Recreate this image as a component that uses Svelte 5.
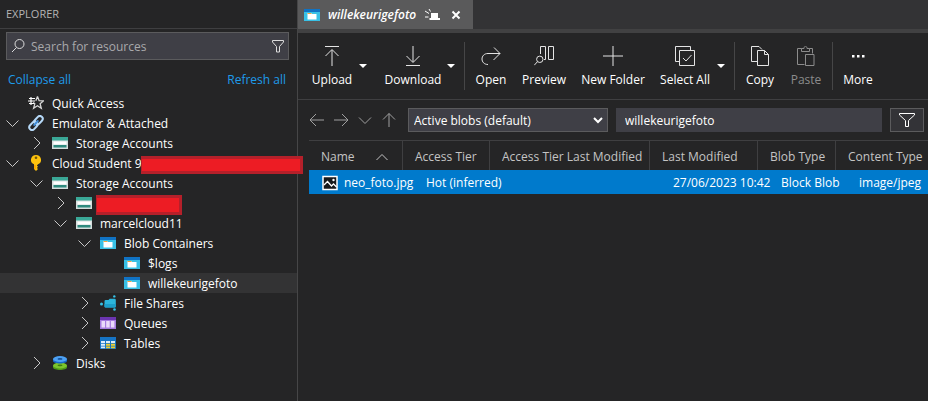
<script>
  const tree = [
    { level: 0, icon: 'quick', label: 'Quick Access', chevron: '' },
    { level: 0, icon: 'link', label: 'Emulator & Attached', chevron: 'open' },
    { level: 1, icon: 'storage', label: 'Storage Accounts', chevron: 'closed' },
    { level: 0, icon: 'key', label: 'Cloud Student 9', chevron: 'open', redacted: 'wide' },
    { level: 1, icon: 'storage', label: 'Storage Accounts', chevron: 'open' },
    { level: 2, icon: 'storage', label: '', chevron: 'closed', redacted: 'name' },
    { level: 2, icon: 'storage', label: 'marcelcloud11', chevron: 'open' },
    { level: 3, icon: 'blob', label: 'Blob Containers', chevron: 'open' },
    { level: 4, icon: 'blob', label: '$logs', chevron: '' },
    { level: 4, icon: 'blob', label: 'willekeurigefoto', chevron: '', selected: true },
    { level: 3, icon: 'share', label: 'File Shares', chevron: 'closed' },
    { level: 3, icon: 'queue', label: 'Queues', chevron: 'closed' },
    { level: 3, icon: 'table', label: 'Tables', chevron: 'closed' },
    { level: 1, icon: 'disks', label: 'Disks', chevron: 'closed' }
  ];

  const toolbar = [
    [
      { label: 'Upload', icon: 'upload', width: 48, menu: true },
      { label: 'Download', icon: 'download', width: 62, menu: true }
    ],
    [
      { label: 'Open', icon: 'open', width: 42 },
      { label: 'Preview', icon: 'preview', width: 52 },
      { label: 'New Folder', icon: 'plus', width: 74 },
      { label: 'Select All', icon: 'select', width: 58, menu: true }
    ],
    [
      { label: 'Copy', icon: 'copy', width: 40 },
      { label: 'Paste', icon: 'paste', width: 40, disabled: true }
    ],
    [{ label: 'More', icon: 'more', width: 40 }]
  ];

  const columns = ['Name', 'Access Tier', 'Access Tier Last Modified', 'Last Modified', 'Blob Type', 'Content Type'];
  let path = $state('willekeurigefoto');
  let search = $state('');
</script>

{#snippet treeIcon(name)}
  <svg class="icon" viewBox="0 0 16 16" aria-hidden="true">
    {#if name === 'quick'}
      <path d="M9.5 1.5l1.6 4.2 4.4.2-3.4 2.8 1.2 4.6-3.9-2.6-3.8 2.6 1.2-4.5-1.6-1.4M7.8 5.7l1.7-4.2" fill="none" stroke="#d8d8d8" stroke-width="1.3" />
      <path d="M1 3.5h6M0 6h7M1 8.5h5M3 2v8" fill="none" stroke="#fff" stroke-width="1.2" />
    {:else if name === 'link'}
      <g transform="rotate(-47 8 8)" fill="none">
        <rect x="-.5" y="5.2" width="9.5" height="5.6" rx="2.8" stroke="#b5d8f7" stroke-width="2" />
        <rect x="7" y="5.2" width="9.5" height="5.6" rx="2.8" stroke="#b5d8f7" stroke-width="2" />
        <path d="M4.5 8h7" stroke="#3e8cd8" stroke-width="2" />
      </g>
    {:else if name === 'storage'}
      <path d="M0 2h16v12H0z" fill="#d5dedd" />
      <path d="M0 2h16v3.500H0z" fill="#3aa897" />
      <path d="M1.500 6.500h13v3h-13z" fill="#fff" />
      <path d="M1.500 10h13v2.500h-13z" fill="#2f8a7e" />
    {:else if name === 'key'}
      <path d="M8 0a5 4.800 0 0 0-2 9.200v4.900L8 16l2-1.900-1.100-1.200L10 11.700l-1.100-1.200L10 9.200A5 4.800 0 0 0 8 0z" fill="#fdc20d" />
      <circle cx="8" cy="2.700" r="1.300" fill="#70560b" />
      <path d="M7 10v4" stroke="#f08c00" stroke-width="1" />
    {:else if name === 'blob'}
      <path d="M0 2h16v12H0z" fill="#38c0e5" />
      <path d="M0 2h16v3H0z" fill="#1073c4" />
      <path d="M3.500 6h3.500l1 1h4.500v5.500h-9z" fill="#fff" />
      <path d="M3.500 6h3.500l.8 1H3.500z" fill="#f3a340" />
    {:else if name === 'share'}
      <path d="M4.500 6.200Q4.500 5 5.700 5H8.500l1.200-1.300h4.800q1.300 0 1.300 1.300v6.300q0 1.200-1.200 1.200H5.700q-1.200 0-1.200-1.200z" fill="#2cb6dc" />
      <path d="M4.500 9h11.300v2.300q0 1.200-1.200 1.200H5.700q-1.200 0-1.200-1.200z" fill="#1c9fca" />
      <circle cx="1.500" cy="9" r="1.500" fill="#36c3e8" />
      <circle cx="14.300" cy="1.400" r="1.200" fill="#36c3e8" />
      <circle cx="14.500" cy="14.500" r="1.300" fill="#36c3e8" />
    {:else if name === 'queue'}
      <path d="M0 2h16v12H0z" fill="#a67be0" />
      <path d="M0 2h16v3H0z" fill="#6b35b0" />
      <path d="M1.500 6h3.500v6.500H1.500zM6.200 6h3.500v6.500H6.200zM10.900 6h3.500v6.500h-3.500z" fill="#ead9fa" />
    {:else if name === 'table'}
      <path d="M0 2h16v12H0z" fill="#1674c5" />
      <path d="M1 6h4v2H1zM6 6h4v2H6zM11 6h4v2h-4zM1 8.800h4v2H1z M1 11.500h4v1.700H1z" fill="#dcecf9" />
      <path d="M6 8.800h4v2H6zM11 8.800h4v2h-4zM6 11.500h4v1.700H6zM11 11.500h4v1.700h-4z" fill="#eccd30" />
    {:else}
      <path d="M1 10.500v1.800c0 3.600 14 3.600 14 0v-1.800z" fill="#4e9a17" />
      <ellipse cx="8" cy="10.500" rx="7" ry="3" fill="#7bc52d" />
      <ellipse cx="8" cy="10.300" rx="2.500" ry=".9" fill="#3e7b13" />
      <path d="M1 4v1.800c0 3.600 14 3.600 14 0V4z" fill="#1669c7" />
      <ellipse cx="8" cy="4" rx="7" ry="3" fill="#4ca1f4" />
      <ellipse cx="8" cy="3.900" rx="2.500" ry=".9" fill="#154f96" />
    {/if}
  </svg>
{/snippet}

{#snippet toolIcon(name)}
  <svg class="tool-icon" viewBox="0 0 20 20" aria-hidden="true">
    {#if name === 'upload'}
      <path d="M3 .5h14M10 20V4M3.500 10L10 3.500l6.500 6.500" />
    {:else if name === 'download'}
      <path d="M3 19.500h14M10 0v16M3.500 10l6.500 6.500 6.500-6.500" />
    {:else if name === 'open'}
      <path d="M13 1.500L19 7.500 12.500 14M19 7.500H7C-1 7.500-1 18.500 7 18.500" />
    {:else if name === 'preview'}
      <path d="M6.500 8V.5h5v13h-1.500M14.500.5h5v13h-5z" />
      <circle cx="5.800" cy="13.300" r="3.200" />
      <path d="M3.500 15.600L.3 19.200" />
    {:else if name === 'plus'}
      <path d="M0 10h20M10 0v20" />
    {:else if name === 'select'}
      <path d="M4.500 15.500h-4V.5h15v4M4.500 4.500h15v15h-15zM8 12l3 3 5.500-6" />
    {:else if name === 'copy'}
      <path d="M7 15.500H1.500V.5H9L12 3.500M7.500 4.500h7l4 4v11h-11zM14.500 4.500v4h4" />
    {:else if name === 'paste'}
      <path d="M8.500 18.500h-7v-16h4M13.500 2.500h3v5M5.500 5.500v-3h2.500c0-3 3-3 3 0h2.500v3zM9.500 8.500h8.500v11H9.500z" />
    {:else}
      <path d="M4 9h2.500v2.500H4zM9 9h2.500v2.500H9zM14 9h2.500v2.500H14z" fill="#fff" stroke="none" />
    {/if}
  </svg>
{/snippet}

<div class="app">
  <aside>
    <h1>EXPLORER</h1>
    <div class="search">
      <svg viewBox="0 0 16 16" aria-hidden="true"><circle cx="9.500" cy="6" r="4.500" /><path d="M6.500 9.500L2 14" /></svg>
      <input type="text" aria-label="Search for resources" placeholder="Search for resources" bind:value={search} />
      <button aria-label="Filter resources"><svg viewBox="0 0 16 16"><path d="M2.500 2.500h11v1.500L9.500 8.500V14h-3V8.500L2.500 4z" /></svg></button>
    </div>
    <div class="links"><a href="#collapse">Collapse all</a><a href="#refresh">Refresh all</a></div>
    <ul>
      {#each tree as node}
        <li class:selected={node.selected} style="--level: {node.level}">
          <svg class="chevron" viewBox="0 0 16 16" aria-hidden="true">
            {#if node.chevron === 'open'}<path d="M2.500 5.500L8.500 11.500l6-6" />
            {:else if node.chevron === 'closed'}<path d="M6 2l6 6-6 6" />{/if}
          </svg>
          {@render treeIcon(node.icon)}
          <span class="label">{node.label}</span>
          {#if node.redacted}<span class="redaction {node.redacted}"></span>{/if}
        </li>
      {/each}
    </ul>
  </aside>

  <main>
    <div class="tabs">
      <div class="tab">
        {@render treeIcon('blob')}
        <span>willekeurigefoto</span>
        <svg class="pin" viewBox="0 0 16 12" aria-hidden="true"><path d="M6 4h7v5h2v2H4.500V9H6z" fill="#fff" /><path d="M4 0l1.500 2.500M0 2l4 2.500M0 8h3.500" stroke="#fff" fill="none" /></svg>
        <button aria-label="Close tab"><svg viewBox="0 0 10 10"><path d="M1.500 1.500l7 7M8.500 1.500l-7 7" /></svg></button>
      </div>
    </div>

    <div class="toolbar">
      {#each toolbar as group}
        <div class="group">
          {#each group as tool}
            <div class="tool">
              <button class="action" disabled={tool.disabled} style="width: {tool.width}px">
                {@render toolIcon(tool.icon)}
                <span>{tool.label}</span>
              </button>
              {#if tool.menu}
                <button class="menu" aria-label="{tool.label} options"><svg viewBox="0 0 8 4"><path d="M0 0h8L4 4z" /></svg></button>
              {/if}
            </div>
          {/each}
        </div>
      {/each}
    </div>

    <div class="navigation">
      <div class="arrows">
        <button aria-label="Back"><svg viewBox="0 0 16 16"><path d="M15 8H1.500M7 2L1 8l6 6" /></svg></button>
        <button aria-label="Forward"><svg viewBox="0 0 16 16"><path d="M1 8h13.500M9 2l6 6-6 6" /></svg></button>
        <button aria-label="History"><svg viewBox="0 0 16 16"><path d="M2 5.500l6 6 6-6" /></svg></button>
        <button aria-label="Up"><svg viewBox="0 0 16 16"><path d="M8 15V1.500M2 7.500l6-6 6 6" /></svg></button>
      </div>
      <div class="select">
        <select aria-label="Blob view"><option>Active blobs (default)</option></select>
        <svg viewBox="0 0 10 8" aria-hidden="true"><path d="M1 2l4 4 4-4" /></svg>
      </div>
      <input type="text" aria-label="Path" bind:value={path} />
      <button class="filter" aria-label="Filter blobs"><svg viewBox="0 0 16 16"><path d="M.5 1.500h15v1.500L9.500 8.500V14.500h-3V8.500L.5 3z" /></svg></button>
    </div>

    <table>
      <colgroup><col class="c1" /><col class="c2" /><col class="c3" /><col class="c4" /><col class="c5" /><col /></colgroup>
      <thead>
        <tr>
          {#each columns as column, i}
            <th scope="col">
              {#if i === 0}
                <div class="sorted">{column}<svg viewBox="0 0 12 8" aria-hidden="true"><path d="M.5 7L6 1.500 11.500 7" /></svg></div>
              {:else}{column}{/if}
            </th>
          {/each}
        </tr>
      </thead>
      <tbody>
        <tr>
          <td>
            <div class="file">
              <svg viewBox="0 0 16 16" aria-hidden="true"><path d="M1 1.500h14v13H1z" fill="#17191c" stroke="#fff" stroke-width="1.500" /><path d="M2 10l3.500-3.500 4 4.500 2-2 3 3" fill="none" stroke="#fff" stroke-width="1.300" /><circle cx="11.500" cy="5" r="1.200" fill="#fff" /></svg>
              neo_foto.jpg
            </div>
          </td>
          <td>Hot (inferred)</td>
          <td></td>
          <td>27/06/2023 10:42</td>
          <td>Block Blob</td>
          <td>image/jpeg</td>
        </tr>
      </tbody>
    </table>
  </main>
</div>

<style>
  :global(body) { background: #252526; }
  .app {
    display: flex;
    min-height: 100vh;
    background: #252526;
    color: #fff;
    font: 12px/20px "Open Sans", "Noto Sans", sans-serif;
  }
  button, input, select { box-sizing: border-box; margin: 0; padding: 0; border: 0; border-radius: 0; background: none; color: inherit; font: inherit; }
  svg { display: block; flex: none; }

  aside { flex: none; box-sizing: border-box; width: 298px; border-right: 1px solid #464647; }
  h1 { margin: 0; padding: 4px 6px; border-bottom: 1px solid #3f3f41; color: #b4b4b4; font-size: 11px; font-weight: 400; }
  .search { display: flex; align-items: center; gap: 5px; box-sizing: border-box; height: 28px; margin: 3px 8px 0 6px; padding: 0 2px 0 3px; border: 1px solid #5b5b5d; background: #3f3f46; }
  .search svg { width: 16px; height: 16px; fill: none; stroke: #dcdcdc; }
  .search input { flex: 1; min-width: 0; padding-top: 2px; outline: 0; }
  .search input::placeholder { color: #a9a9ac; opacity: 1; }
  .links { display: flex; justify-content: space-between; padding: 10px 11px 3px 8px; }
  .links a { color: #1e9bea; text-decoration: none; }

  ul { margin: 0; padding: 0; list-style: none; }
  li { position: relative; display: flex; align-items: center; height: 20px; padding-left: calc(4px + var(--level) * 24px); white-space: nowrap; }
  li.selected { background: #333334; }
  .chevron { width: 16px; height: 16px; margin-right: 8px; fill: none; stroke: #c8c8c8; }
  .icon { width: 16px; height: 16px; margin-right: 8px; }
  .label { padding-top: 2px; }
  .redaction { position: absolute; z-index: 1; box-sizing: border-box; border: 3px solid #b5202a; border-left-width: 1px; background: #ed1c24; }
  .wide { left: 141px; right: -6px; top: 3px; height: 18px; }
  .name { left: 96px; width: 86px; top: 2px; height: 20px; }

  main { flex: 1; min-width: 0; }
  .tabs { display: flex; height: 29px; border-bottom: 4px solid #414142; background: #333335; }
  .tab { display: flex; align-items: center; box-sizing: border-box; width: 175px; padding-left: 6px; background: #5a5a5b; font-style: italic; font-weight: 600; }
  .tab span { flex: 1; }
  .pin { width: 16px; height: 12px; }
  .tab button { margin: 0 12px 0 10px; }
  .tab button svg { width: 10px; height: 10px; fill: none; stroke: #fff; stroke-width: 2; }

  .toolbar { display: flex; height: 66px; padding-left: 10px; border-bottom: 1px solid #3f3f41; }
  .group { display: flex; gap: 6px; margin: 9px 0; }
  .group:first-child { gap: 12px; }
  .group + .group { margin-left: 6px; padding-left: 5px; border-left: 1px solid #464647; }
  .tool { display: flex; }
  .action { display: flex; flex-direction: column; align-items: center; padding-top: 4px; gap: 4px; white-space: nowrap; }
  .action:disabled { color: #8c8c8c; }
  .tool-icon { width: 20px; height: 20px; fill: none; stroke: #e4e4e4; }
  .action:disabled .tool-icon { stroke: #8c8c8c; }
  .menu { width: 14px; }
  .menu svg { width: 8px; height: 4px; margin: 0 auto; fill: #fff; }

  .navigation { display: flex; gap: 8px; height: 24px; padding: 8px 4px 8px 11px; }
  .arrows { display: flex; gap: 8px; width: 91px; }
  .arrows button svg { width: 16px; height: 16px; fill: none; stroke: #a0a0a0; }
  .select { position: relative; width: 200px; }
  select { width: 100%; height: 24px; padding: 2px 5px 0; appearance: none; border: 1px solid #5b5b5d; background: #3f3f46; }
  .select svg { position: absolute; right: 5px; top: 8px; width: 10px; height: 8px; fill: none; stroke: #fff; stroke-width: 2; pointer-events: none; }
  .navigation > input { flex: 1; min-width: 0; padding: 2px 9px 0; background: #3f3f46; }
  .filter { width: 34px; border: 1px solid #5b5b5d; background: #333337; }
  .filter svg { width: 16px; height: 16px; margin: 0 auto; fill: none; stroke: #fff; }

  table { width: calc(100% - 11px); margin-left: 11px; table-layout: fixed; border-collapse: separate; border-spacing: 0; border-top: 1px solid #3f3f41; }
  .c1 { width: 94px; }
  .c2 { width: 87px; }
  .c3 { width: 160px; }
  .c4 { width: 108px; }
  .c5 { width: 78px; }
  th, td { box-sizing: border-box; text-align: left; font-weight: 400; white-space: nowrap; }
  th { height: 29px; padding: 2px 0 0 12px; border-right: 1px solid #3f3f41; color: #c4c4c4; }
  th:last-child { border-right: 0; }
  td { height: 24px; padding: 2px 0 0 23px; background: #007acc; }
  td:first-child { padding-left: 13px; }
  .sorted { display: flex; align-items: center; justify-content: space-between; padding-right: 14px; }
  .sorted svg { width: 12px; height: 8px; fill: none; stroke: #c4c4c4; }
  .file { display: flex; align-items: center; gap: 6px; }
  .file svg { width: 16px; height: 16px; }
</style>
